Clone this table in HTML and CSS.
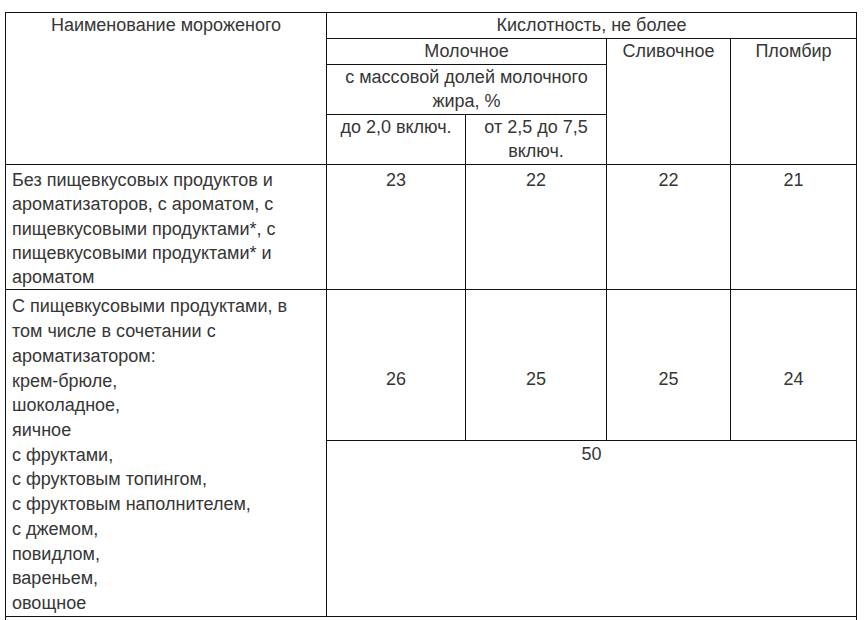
FILE: index.html
```html
<!DOCTYPE html>
<html lang="ru">
<head>
<meta charset="utf-8">
<title>Кислотность мороженого</title>
<link rel="stylesheet" href="styles.css">
</head>
<body>
<table class="acid">
  <colgroup>
    <col class="c1"><col class="c2"><col class="c3"><col class="c4"><col class="c5">
  </colgroup>
  <tbody>
    <tr class="h">
      <td rowspan="4" class="center">Наименование мороженого</td>
      <td colspan="4" class="center">Кислотность, не более</td>
    </tr>
    <tr class="h">
      <td colspan="2" class="center">Молочное</td>
      <td rowspan="3" class="center">Сливочное</td>
      <td rowspan="3" class="center">Пломбир</td>
    </tr>
    <tr class="h">
      <td colspan="2" class="center">с массовой долей молочного жира, %</td>
    </tr>
    <tr class="h">
      <td class="center">до 2,0 включ.</td>
      <td class="center">от 2,5 до 7,5 включ.</td>
    </tr>
    <tr class="r1">
      <td class="name">Без пищевкусовых продуктов и ароматизаторов, с ароматом, с пищевкусовыми продуктами*, с пищевкусовыми продуктами* и ароматом</td>
      <td class="center">23</td>
      <td class="center">22</td>
      <td class="center">22</td>
      <td class="center">21</td>
    </tr>
    <tr class="r2">
      <td rowspan="2" class="name list">С пищевкусовыми продуктами, в том числе в сочетании с ароматизатором:<br>крем-брюле,<br>шоколадное,<br>яичное<br>с фруктами,<br>с фруктовым топингом,<br>с фруктовым наполнителем,<br>с джемом,<br>повидлом,<br>вареньем,<br>овощное</td>
      <td class="center mid">26</td>
      <td class="center mid">25</td>
      <td class="center mid">25</td>
      <td class="center mid">24</td>
    </tr>
    <tr class="r3">
      <td colspan="4" class="center">50</td>
    </tr>
    <tr class="r4">
      <td colspan="5" class="name"></td>
    </tr>
  </tbody>
</table>
</body>
</html>
```
FILE: styles.css
```css
html, body {
  background: #ffffff;
}
body {
  margin: 12px 0 0 5px;
  font-family: "Liberation Sans", Arial, sans-serif;
  font-size: 18px;
  color: #363636;
}
.acid {
  border-collapse: collapse;
  table-layout: fixed;
  width: 852px;
}
.c1 { width: 321px; }
.c2 { width: 139px; }
.c3 { width: 141px; }
.c4 { width: 124px; }
.c5 { width: 126px; }
.acid td {
  border: 1px solid #111111;
  padding: 0 6px 1px;
  line-height: 24px;
  vertical-align: top;
}
.acid .center {
  text-align: center;
}
.acid .name {
  text-align: left;
}
.acid .r1 td {
  padding-top: 3px;
  padding-bottom: 0;
  line-height: 24.3px;
}
.acid .list {
  line-height: 24.7px;
  padding-top: 4px;
  padding-bottom: 0;
}
.acid .r2 {
  height: 150px;
}
.acid .r2 .mid {
  vertical-align: middle;
  padding-top: 29px;
}
.acid .r3 {
  height: 176px;
}
.acid .r3 td {
  padding-top: 1px;
}
.acid .r4 td {
  height: 30px;
}
```
